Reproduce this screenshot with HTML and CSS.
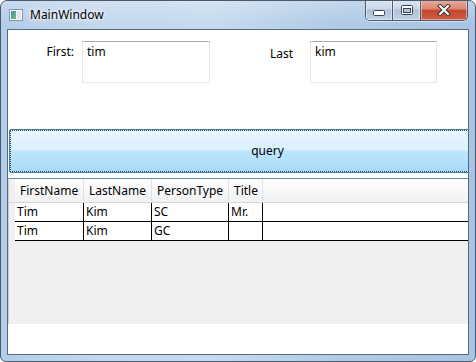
FILE: index.html
```html
<!DOCTYPE html>
<html lang="en">
<head>
    <meta charset="UTF-8">
    <title>MainWindow</title>
    <link rel="stylesheet" href="styles.css">
</head>
<body>

    <div class="window">
        <div class="titlebar">
            <svg class="app-icon" width="14" height="12" viewBox="0 0 14 12">
                <defs>
                    <linearGradient id="ico" x1="0" y1="0" x2="1" y2="1">
                        <stop offset="0" stop-color="#3f8fb0"/>
                        <stop offset="1" stop-color="#7cbf7a"/>
                    </linearGradient>
                </defs>
                <rect x="0.5" y="0.5" width="13" height="11" fill="#f4f6f8" stroke="#8a96a3"/>
                <rect x="2" y="2" width="5" height="8" fill="url(#ico)"/>
                <rect x="8" y="2" width="4" height="8" fill="#dfe5ea"/>
            </svg>
            <span class="title">MainWindow</span>
            <div class="caption-buttons">
                <div class="cap-btn cap-min">
                    <svg width="12" height="6" viewBox="0 0 12 6"><rect x="0.5" y="0.5" width="11" height="5" rx="1" fill="#fff" stroke="#35465a"/></svg>
                </div>
                <div class="cap-btn cap-max">
                    <svg width="12" height="10" viewBox="0 0 12 10">
                        <rect x="0.5" y="0.5" width="11" height="9" rx="1" fill="#fff" stroke="#35465a"/>
                        <rect x="2.5" y="3.5" width="7" height="4" fill="#b3c4d8" stroke="#35465a"/>
                    </svg>
                </div>
                <div class="cap-btn cap-close">
                    <svg width="14" height="12" viewBox="0 0 14 12">
                        <path d="M3 2 L11 10 M11 2 L3 10" stroke="#3a3030" stroke-width="4" stroke-linecap="square"/>
                        <path d="M3 2 L11 10 M11 2 L3 10" stroke="#fff" stroke-width="2" stroke-linecap="square"/>
                    </svg>
                </div>
            </div>
        </div>

        <div class="client">
            <div class="form">
                <label class="lbl lbl-first">First:</label>
                <div class="textbox tb-first">tim</div>
                <label class="lbl lbl-last">Last</label>
                <div class="textbox tb-last">kim</div>
            </div>

            <button class="query-btn">query</button>

            <div class="datagrid">
                <div class="dg-row dg-header">
                    <div class="row-head"></div>
                    <div class="cell">FirstName</div>
                    <div class="cell">LastName</div>
                    <div class="cell">PersonType</div>
                    <div class="cell">Title</div>
                    <div class="filler"></div>
                </div>
                <div class="dg-row">
                    <div class="row-head"></div>
                    <div class="cell">Tim</div>
                    <div class="cell">Kim</div>
                    <div class="cell">SC</div>
                    <div class="cell">Mr.</div>
                    <div class="filler"></div>
                </div>
                <div class="dg-row">
                    <div class="row-head"></div>
                    <div class="cell">Tim</div>
                    <div class="cell">Kim</div>
                    <div class="cell">GC</div>
                    <div class="cell"></div>
                    <div class="filler"></div>
                </div>
            </div>
        </div>
    </div>

</body>
</html>
```

FILE: styles.css
```css
body {
    margin: 0;
    background: #fff;
    font-family: 'Noto Sans', 'Open Sans', sans-serif;
    font-size: 12px;
    color: #000;
}

/* window frame */
.window {
    width: 476px;
    height: 362px;
    box-sizing: border-box;
    border: 1px solid #4a5a6d;
    border-radius: 7px 7px 6px 6px;
    background: linear-gradient(90deg, #b4cde8 0%, #c3d7ed 20%, #c7daee 45%, #b2cbe6 70%, #a9c4e3 100%);
    overflow: hidden;
    display: flex;
    flex-direction: column;
}

.titlebar {
    height: 28px;
    display: flex;
    align-items: flex-start;
    background: linear-gradient(180deg, rgba(255,255,255,0.25), rgba(255,255,255,0) 80%);
}

.app-icon {
    margin: 8px 0 0 8px;
}

.title {
    margin: 6px 0 0 7px;
    line-height: 16px;
    text-shadow: 0 0 6px #fff, 0 0 3px #fff;
}

.caption-buttons {
    margin: -1px 7px 0 auto;
    display: flex;
    height: 20px;
    border: 1px solid #4b5a6c;
    border-top: none;
    border-radius: 0 0 5px 5px;
    overflow: hidden;
    box-shadow: 0 1px 0 rgba(255,255,255,0.5);
}

.cap-btn {
    display: flex;
    justify-content: center;
    align-items: center;
    box-shadow: inset 0 0 0 1px rgba(255,255,255,0.45);
}

.cap-min {
    width: 27px;
    border-right: 1px solid #4b5a6c;
    background: linear-gradient(180deg, #dce6f1 0%, #c9d7e6 45%, #afc1d6 50%, #c2d2e4 100%);
    align-items: flex-end;
    padding-bottom: 4px;
    box-sizing: border-box;
}

.cap-max {
    width: 27px;
    border-right: 1px solid #4b5a6c;
    background: linear-gradient(180deg, #dce6f1 0%, #c9d7e6 45%, #afc1d6 50%, #c2d2e4 100%);
}

.cap-close {
    width: 46px;
    background: linear-gradient(180deg, #e9ae9f 0%, #d98570 45%, #c4452d 52%, #cf5d45 100%);
}

/* client area */
.client {
    margin: 0 6px;
    height: 326px;
    box-sizing: border-box;
    border: 1px solid #566a80;
    background: #fff;
    overflow: hidden;
}

.form {
    height: 99px;
    box-sizing: border-box;
    padding-top: 11px;
    display: flex;
    align-items: flex-start;
}

.lbl {
    line-height: 16px;
}

.lbl-first {
    width: 66px;
    text-align: right;
    margin-top: 3px;
}

.lbl-last {
    width: 40px;
    margin: 5px 0 0 60px;
}

.textbox {
    height: 42px;
    box-sizing: border-box;
    border: 1px solid #e2e6ed;
    border-top-color: #abadb3;
    padding: 2px 4px;
    line-height: 16px;
}

.tb-first {
    width: 128px;
    margin-left: 8px;
}

.tb-last {
    width: 127px;
}

.query-btn {
    display: flex;
    justify-content: center;
    align-items: center;
    width: 517px;
    height: 44px;
    margin-left: 1px;
    padding: 0;
    border: 1px solid #3c7fb1;
    border-radius: 2px;
    background: linear-gradient(180deg, #eaf6fd 0%, #d9f0fc 48%, #bee6fd 50%, #a7d9f5 100%);
    font-family: inherit;
    font-size: 12px;
    line-height: 16px;
    color: #000;
    outline: 1px dotted #2a3a48;
    outline-offset: -2px;
    box-shadow: inset 0 0 0 1px rgba(255,255,255,0.5);
}

/* data grid */
.datagrid {
    margin-top: 5px;
    height: 146px;
    box-sizing: border-box;
    border-top: 1px solid #688caf;
    border-left: 1px solid #c9ced4;
    background: #f0f0f0;
}

.dg-row {
    display: grid;
    grid-template-columns: 6px 69px 68px 77px 34px 1fr;
    height: 19px;
    box-sizing: border-box;
    line-height: 16px;
}

.dg-row .cell {
    background: #fff;
    border-right: 1px solid #000;
    border-bottom: 1px solid #000;
    padding: 1px 0 0 2px;
    white-space: nowrap;
}

.dg-row .filler {
    background: #fff;
    border-bottom: 1px solid #000;
}

.dg-header {
    height: 24px;
    background: linear-gradient(180deg, #ffffff 0%, #f7f8f9 50%, #f1f2f4 100%);
    border-bottom: 1px solid #d5d5d5;
}

.dg-header .cell,
.dg-header .filler {
    background: none;
    border-bottom: none;
}

.dg-header .cell {
    border-right: 1px solid #dfe2e5;
    padding: 4px 0 0 5px;
}

.dg-header .row-head {
    background: #f0f0f0;
}
```
